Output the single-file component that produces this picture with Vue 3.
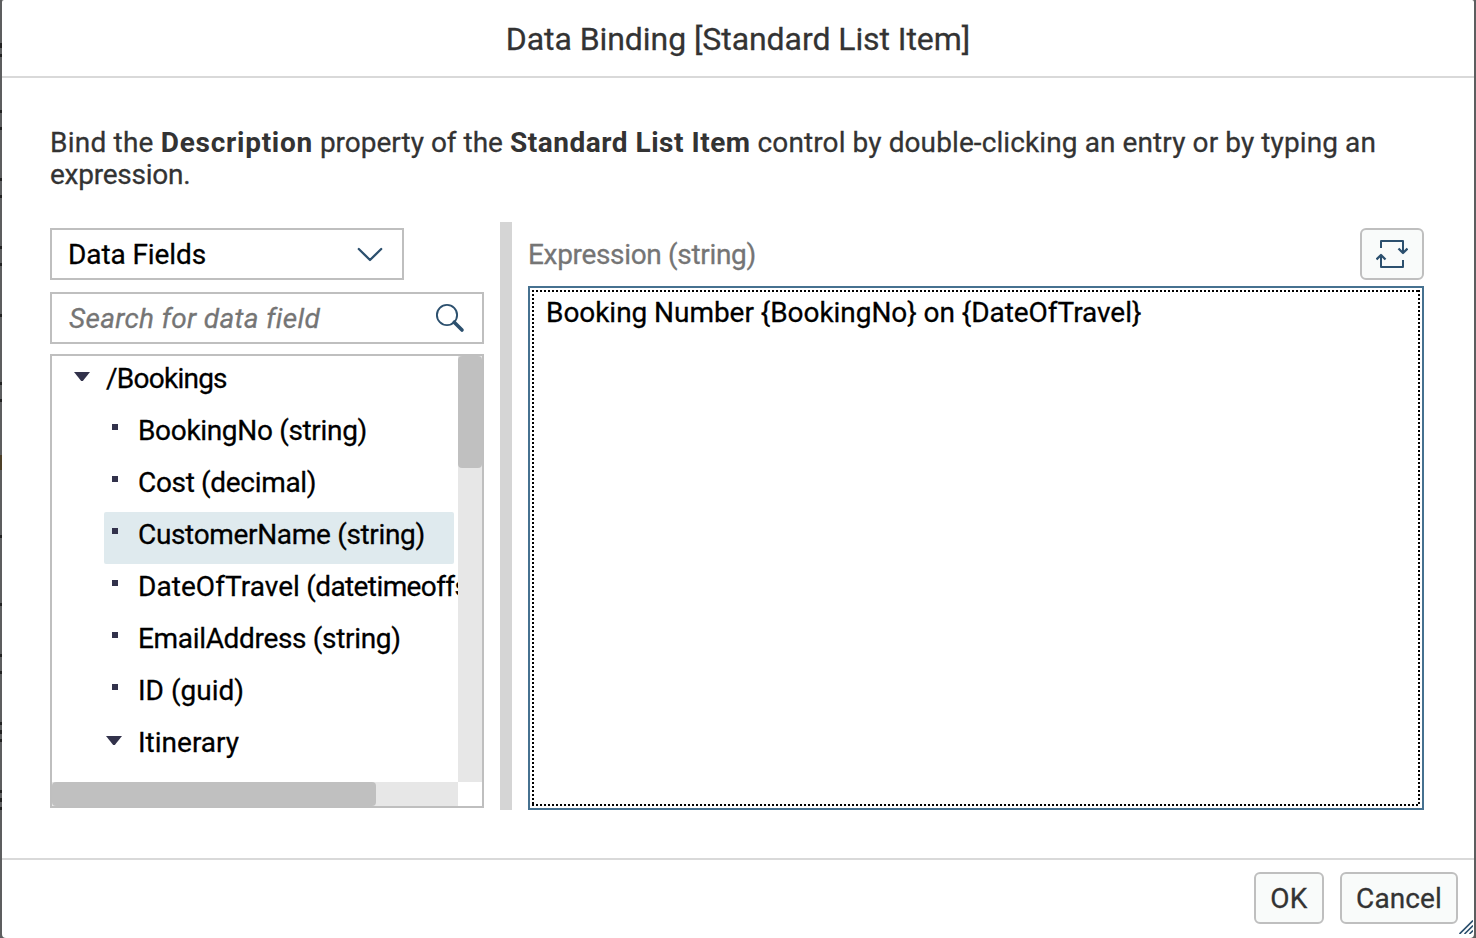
<script setup>
const fields = [
  { name: '/Bookings', kind: 'root' },
  { name: 'BookingNo', type: ' (string)', kind: 'leaf' },
  { name: 'Cost', type: ' (decimal)', kind: 'leaf' },
  { name: 'CustomerName', type: ' (string)', kind: 'leaf', selected: true },
  { name: 'DateOfTravel', type: ' (datetimeoffset)', kind: 'leaf wide' },
  { name: 'EmailAddress', type: ' (string)', kind: 'leaf' },
  { name: 'ID', type: ' (guid)', kind: 'leaf short' },
  { name: 'Itinerary', kind: 'node' },
]
</script>

<template>
  <div class="stage">
    <section class="dialog">
      <header class="head"><h1>Data Binding [Standard List Item]</h1></header>

      <main class="body">
        <p class="intro">
          <span class="l1"><span class="bind">Bind the </span><b>Description</b> property of the <b class="b2">Standard List Item</b><span class="rest"> control by double-clicking an entry or by typing an</span></span>
          <span class="l2">expression.</span>
        </p>

        <div class="columns">
          <div class="left">
            <div class="select">
              <span>Data Fields</span>
              <svg width="26" height="16" viewBox="0 0 26 16"><path d="M1.8 3 L13 14 L24.2 3" fill="none" stroke="#2c506e" stroke-width="2.3" stroke-linecap="round" stroke-linejoin="round" /></svg>
            </div>
            <div class="search">
              <span>Search for data field</span>
              <svg width="30" height="30" viewBox="0 0 30 30" fill="none" stroke="#2c506e">
                <circle cx="12" cy="12" r="10.1" stroke-width="1.9" />
                <path d="M19.2 19.2 L27 27" stroke-width="3.6" stroke-linecap="round" />
              </svg>
            </div>
            <div class="tree">
              <ul class="rows">
                <li v-for="f in fields" :key="f.name" :class="[f.kind, { selected: f.selected }]">
                  <i class="mark"></i><span class="label">{{ f.name }}<span v-if="f.type" class="type">{{ f.type }}</span></span>
                </li>
              </ul>
              <div class="vbar"><div class="vthumb"></div></div>
              <div class="hbar"><div class="hthumb"></div></div>
            </div>
          </div>

          <div class="splitter"></div>

          <div class="right">
            <div class="bar">
              <label>Expression (string)</label>
              <button class="btn swap">
                <svg width="32" height="30" viewBox="0 0 32 30" fill="none" stroke="#2c506e" stroke-width="2" stroke-linejoin="round">
                  <path d="M5 9 V2 H27 V14" />
                  <path d="M22.5 9.5 L27 14 L31.5 9.5" stroke-width="2.3" />
                  <path d="M27 21 V28 H5 V16" />
                  <path d="M0.5 20.5 L5 16 L9.5 20.5" stroke-width="2.3" />
                </svg>
              </button>
            </div>
            <div class="editor"><div class="focus"><span>Booking Number {BookingNo} on {DateOfTravel}</span></div></div>
          </div>
        </div>
      </main>

      <footer class="foot">
        <button class="btn ok">OK</button>
        <button class="btn cancel">Cancel</button>
      </footer>
      <svg class="grip" width="14" height="14" viewBox="0 0 14 14" stroke="#2c506e" stroke-width="1.6"><path d="M0.5 14 L14 0.5 M5.5 14 L14 5.5 M10.5 14 L14 10.5" /></svg>
    </section>
  </div>
</template>

<style>
body { background: #5d5e5f; overflow: hidden; }
</style>

<style scoped>
* { box-sizing: border-box; }
.stage {
  width: 1476px; height: 938px; padding: 0 2px;
  font-family: Roboto, "Liberation Sans", sans-serif; font-size: 28px; color: #333;
  -webkit-text-stroke: 0.28px currentColor;
  background:
    linear-gradient(#222, #222) 0 43px / 2px 5px no-repeat,
    linear-gradient(#222, #222) 0 54px / 2px 3px no-repeat,
    linear-gradient(#222, #222) 0 110px / 2px 3px no-repeat,
    linear-gradient(#222, #222) 0 127px / 2px 3px no-repeat,
    linear-gradient(#222, #222) 0 178px / 2px 3px no-repeat,
    linear-gradient(#222, #222) 0 195px / 2px 3px no-repeat,
    linear-gradient(#222, #222) 0 246px / 2px 3px no-repeat,
    linear-gradient(#222, #222) 0 263px / 2px 3px no-repeat,
    linear-gradient(#222, #222) 0 314px / 2px 3px no-repeat,
    linear-gradient(#222, #222) 0 382px / 2px 3px no-repeat,
    linear-gradient(#222, #222) 0 399px / 2px 3px no-repeat,
    linear-gradient(#4d4028, #4d4028) 0 455px / 2px 15px no-repeat,
    linear-gradient(#222, #222) 0 535px / 2px 3px no-repeat,
    linear-gradient(#222, #222) 0 603px / 2px 3px no-repeat,
    linear-gradient(#222, #222) 0 654px / 2px 3px no-repeat,
    linear-gradient(#222, #222) 0 671px / 2px 3px no-repeat,
    linear-gradient(#222, #222) 0 722px / 2px 3px no-repeat,
    linear-gradient(#222, #222) 0 730px / 2px 4px no-repeat,
    linear-gradient(#222, #222) 0 739px / 2px 3px no-repeat,
    linear-gradient(#222, #222) 0 790px / 2px 3px no-repeat,
    linear-gradient(#222, #222) 0 798px / 2px 4px no-repeat,
    linear-gradient(#222, #222) 0 807px / 2px 3px no-repeat,
    #5d5e5f;
}
.dialog { position: relative; height: 938px; display: flex; flex-direction: column; background: #fff; border-radius: 2px 2px 4px 4px; }
.head { height: 78px; border-bottom: 2px solid #d9d9d9; display: flex; align-items: center; justify-content: center; }
h1 { margin: 0; padding-top: 2px; font-size: 32px; font-weight: 400; line-height: 40px; letter-spacing: -0.07px; white-space: nowrap; }
.body { flex: 1; padding: 49px 50px 0 48px; }
.intro { margin: 0; line-height: 32px; height: 95px; }
.l1, .l2 { display: block; white-space: nowrap; }
.l2 { letter-spacing: -0.25px; }
.bind { letter-spacing: 0.22px; }
.rest { letter-spacing: 0.1px; }
.intro b { font-weight: 700; letter-spacing: 0.73px; -webkit-text-stroke: 0; }
.intro .b2 { letter-spacing: 0.52px; }
.columns { display: flex; height: 588px; }
.left { width: 434px; padding-top: 6px; display: flex; flex-direction: column; color: #000; }
.select, .search { border: 2px solid #bfbfbf; height: 52px; display: flex; align-items: center; justify-content: space-between; white-space: nowrap; }
.select { width: 354px; padding: 0 19px 0 16px; letter-spacing: -0.1px; }
.search { margin-top: 12px; padding: 0 17px; color: #757575; font-style: italic; letter-spacing: 0.32px; }
.tree { margin-top: 10px; height: 454px; border: 2px solid #bfbfbf; display: grid; grid-template: 426px 24px / 406px 24px; }
.rows { list-style: none; margin: 0; padding: 0; overflow: hidden; }
li { height: 52px; display: flex; align-items: center; margin-left: 52px; width: 350px; white-space: nowrap; border-radius: 2px; line-height: 52px; letter-spacing: -0.33px; }
.label { flex: none; margin-top: -6px; white-space: pre; }
.root { margin-left: 20px; letter-spacing: -0.75px; }
.wide { letter-spacing: 0.05px; }
.wide .type { letter-spacing: -0.6px; }
.short, .node { letter-spacing: 0; }
.selected { background: #dfeaee; }
.mark { width: 34px; height: 52px; flex: none; display: flex; }
.leaf .mark::before { content: ""; width: 6px; height: 6px; margin: 16px 0 0 8px; background: #32324b; }
.root .mark::before, .node .mark::before { content: ""; width: 16px; height: 9px; margin: 16px 0 0 2px; background: #32324b; clip-path: polygon(0 0, 100% 0, 55% 100%, 45% 100%); }
.vbar, .hbar { background: #e7e7e7; }
.vthumb { height: 112px; background: #c0c0c0; border-radius: 4px; }
.hthumb { width: 324px; height: 24px; background: #c0c0c0; border-radius: 4px; }
.splitter { width: 12px; margin-left: 16px; background: #d5d5d5; }
.right { flex: 1; margin-left: 16px; padding-top: 6px; }
.bar { display: flex; justify-content: space-between; align-items: center; height: 52px; color: #757575; letter-spacing: -0.33px; }
.btn { font: inherit; color: #333; background: #f9fbfa; border: 2px solid #bfbfbf; border-radius: 6px; height: 52px; padding: 0; display: flex; align-items: center; justify-content: center; }
.swap { width: 64px; }
.editor { margin-top: 6px; height: 524px; border: 2px solid #467190; padding: 2px; color: #000; letter-spacing: -0.05px; }
.focus {
  height: 516px; padding: 7px 14px; line-height: 32px;
  background:
    repeating-linear-gradient(90deg, #000 0 2px, transparent 2px 4px) 0 0 / 100% 2px no-repeat,
    repeating-linear-gradient(90deg, #000 0 2px, transparent 2px 4px) 0 100% / 100% 2px no-repeat,
    repeating-linear-gradient(#000 0 2px, transparent 2px 4px) 0 0 / 2px 100% no-repeat,
    repeating-linear-gradient(#000 0 2px, transparent 2px 4px) 100% 0 / 2px 100% no-repeat;
}
.foot { height: 80px; border-top: 2px solid #d9d9d9; padding: 12px 16px 0 0; display: flex; justify-content: flex-end; gap: 16px; }
.ok { width: 70px; letter-spacing: 0.4px; }
.cancel { width: 118px; letter-spacing: 0.1px; }
.grip { position: absolute; right: 1px; bottom: 4px; }
</style>
